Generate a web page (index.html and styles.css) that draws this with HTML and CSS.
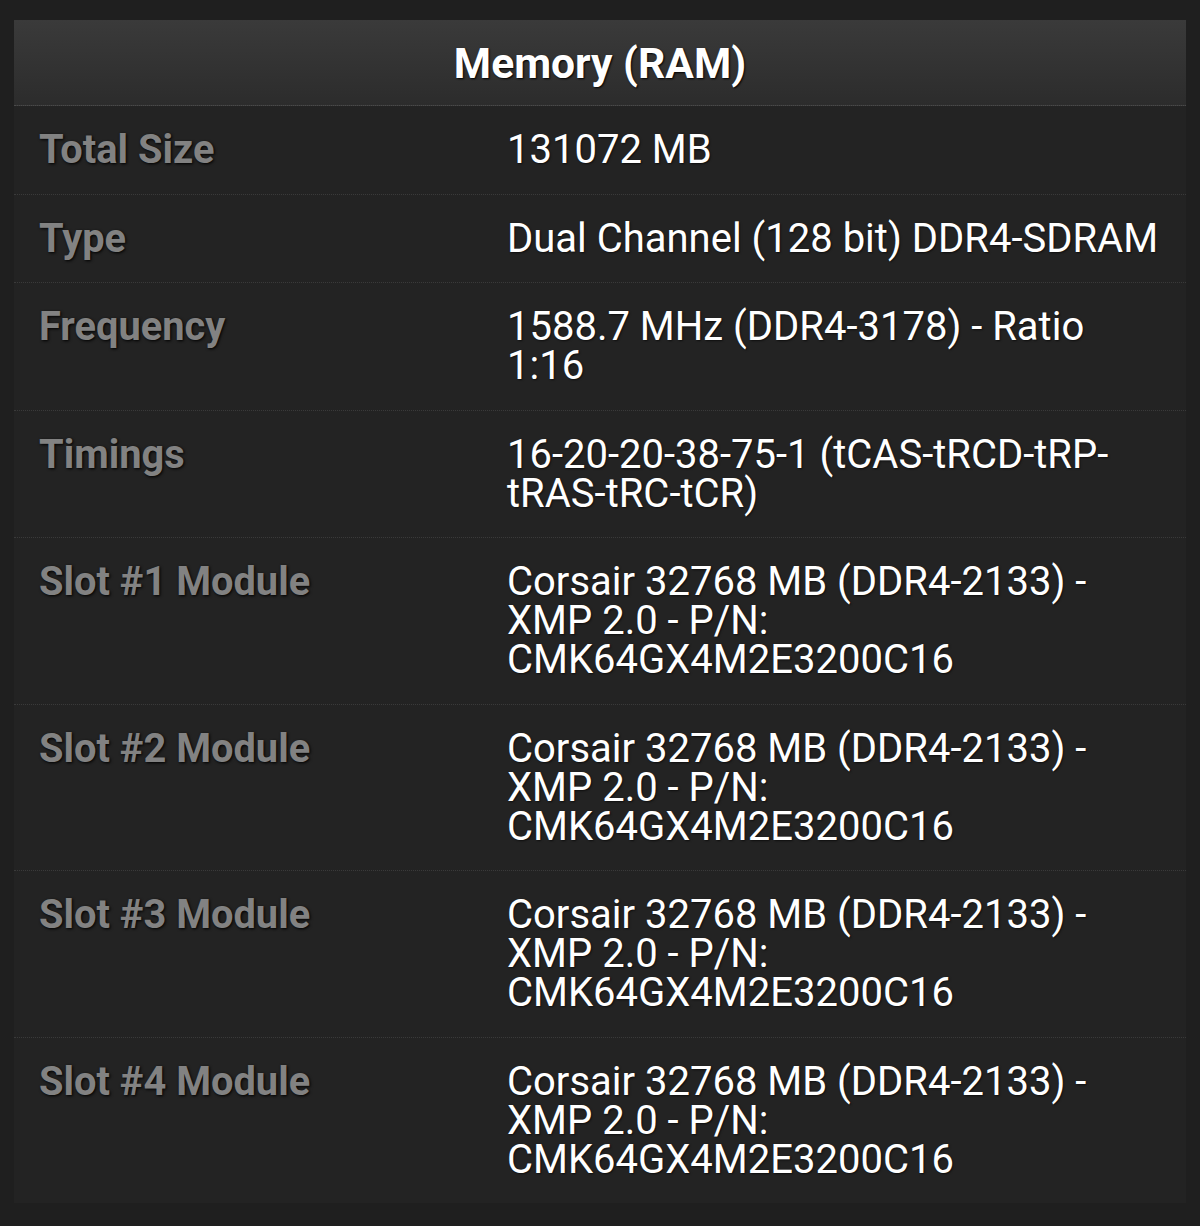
FILE: index.html
```html
<!DOCTYPE html>
<html>
<head>
<meta charset="utf-8">
<link rel="stylesheet" href="styles.css">
</head>
<body>
<div class="panel">
  <div class="panel-head">Memory (RAM)</div>
  <div class="row"><div class="label">Total Size</div><div class="value">131072 MB</div></div>
  <div class="row"><div class="label">Type</div><div class="value">Dual Channel (128 bit) DDR4-SDRAM</div></div>
  <div class="row"><div class="label">Frequency</div><div class="value">1588.7 MHz (DDR4-3178) - Ratio 1:16</div></div>
  <div class="row"><div class="label">Timings</div><div class="value">16-20-20-38-75-1 (tCAS-tRCD-tRP-tRAS-tRC-tCR)</div></div>
  <div class="row"><div class="label">Slot #1 Module</div><div class="value">Corsair 32768 MB (DDR4-2133) - XMP 2.0 - P/N: CMK64GX4M2E3200C16</div></div>
  <div class="row"><div class="label">Slot #2 Module</div><div class="value">Corsair 32768 MB (DDR4-2133) - XMP 2.0 - P/N: CMK64GX4M2E3200C16</div></div>
  <div class="row"><div class="label">Slot #3 Module</div><div class="value">Corsair 32768 MB (DDR4-2133) - XMP 2.0 - P/N: CMK64GX4M2E3200C16</div></div>
  <div class="row last"><div class="label">Slot #4 Module</div><div class="value">Corsair 32768 MB (DDR4-2133) - XMP 2.0 - P/N: CMK64GX4M2E3200C16</div></div>
</div>
</body>
</html>
```
FILE: styles.css
```css
html, body {
  margin: 0;
  padding: 0;
  background: #1f1f1f;
}
body {
  padding: 20px 14px 24px 14px;
  font-family: Roboto, "Liberation Sans", sans-serif;
}
.panel {
  width: 1172px;
  background: #232323;
}
.panel-head {
  background: linear-gradient(to bottom, #3a3a3a 0%, #2c2c2c 100%);
  color: #ffffff;
  font-weight: 700;
  font-size: 42.6px;
  line-height: 38.4px;
  text-align: center;
  padding: 24px 26px 23px 26px;
  text-shadow: 1px 1px 2px #000;
  border-bottom: 1px dotted #4a4a4a;
}
.row {
  display: grid;
  grid-template-columns: 467px 1fr;
  border-bottom: 1px dotted #3a3a3a;
}
.row.last {
  border-bottom: none;
}
.label, .value {
  line-height: 39px;
  padding: 24px 26px 24.5px 25px;
}
.label {
  color: #828282;
  font-size: 39.8px;
  font-weight: 700;
  text-shadow: 1px 1px 3px #000;
}
.value {
  color: #ffffff;
  font-size: 40px;
  font-weight: 400;
  padding-left: 26px;
  text-shadow: 1px 1px 2px rgba(0,0,0,0.6);
}
```
